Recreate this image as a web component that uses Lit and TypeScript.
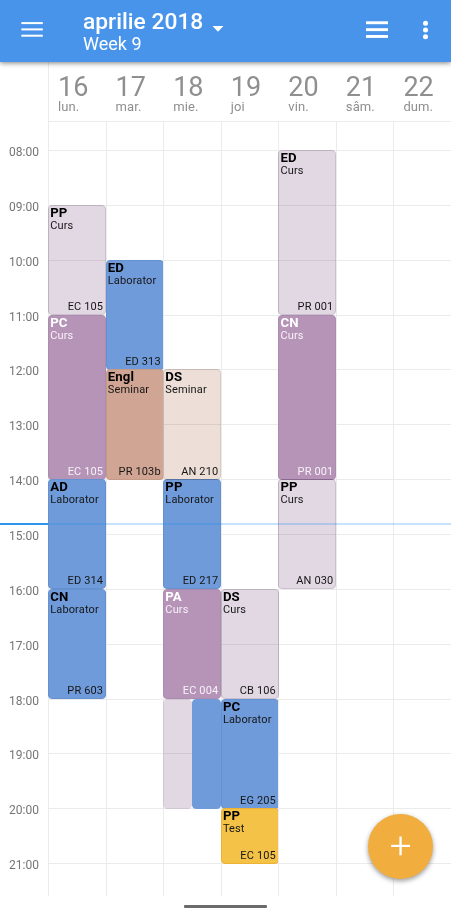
import { LitElement, html, css, svg } from "lit";
import { customElement, property } from "lit/decorators.js";
import { classMap } from "lit/directives/class-map.js";
import { styleMap } from "lit/directives/style-map.js";

interface Lesson {
  from: number;
  to: number;
  tone: string;
  title?: string;
  kind?: string;
  room?: string;
  half?: "left" | "right";
}

interface Day {
  date: number;
  name: string;
  lessons: Lesson[];
}

const FIRST_HOUR = 8;
const HOURS = Array.from({ length: 14 }, (_, i) => FIRST_HOUR + i);

const DAYS: Day[] = [
  {
    date: 16,
    name: "lun.",
    lessons: [
      { from: 9, to: 11, tone: "lavender", title: "PP", kind: "Curs", room: "EC 105" },
      { from: 11, to: 14, tone: "purple", title: "PC", kind: "Curs", room: "EC 105" },
      { from: 14, to: 16, tone: "blue", title: "AD", kind: "Laborator", room: "ED 314" },
      { from: 16, to: 18, tone: "blue", title: "CN", kind: "Laborator", room: "PR 603" },
    ],
  },
  {
    date: 17,
    name: "mar.",
    lessons: [
      { from: 10, to: 12, tone: "blue", title: "ED", kind: "Laborator", room: "ED 313" },
      { from: 12, to: 14, tone: "clay", title: "Engl", kind: "Seminar", room: "PR 103b" },
    ],
  },
  {
    date: 18,
    name: "mie.",
    lessons: [
      { from: 12, to: 14, tone: "sand", title: "DS", kind: "Seminar", room: "AN 210" },
      { from: 14, to: 16, tone: "blue", title: "PP", kind: "Laborator", room: "ED 217" },
      { from: 16, to: 18, tone: "purple", title: "PA", kind: "Curs", room: "EC 004" },
      { from: 18, to: 20, tone: "lavender", half: "left" },
      { from: 18, to: 20, tone: "blue", half: "right" },
    ],
  },
  {
    date: 19,
    name: "joi",
    lessons: [
      { from: 16, to: 18, tone: "lavender", title: "DS", kind: "Curs", room: "CB 106" },
      { from: 18, to: 20, tone: "blue", title: "PC", kind: "Laborator", room: "EG 205" },
      { from: 20, to: 21, tone: "amber", title: "PP", kind: "Test", room: "EC 105" },
    ],
  },
  {
    date: 20,
    name: "vin.",
    lessons: [
      { from: 8, to: 11, tone: "lavender", title: "ED", kind: "Curs", room: "PR 001" },
      { from: 11, to: 14, tone: "purple", title: "CN", kind: "Curs", room: "PR 001" },
      { from: 14, to: 16, tone: "lavender", title: "PP", kind: "Curs", room: "AN 030" },
    ],
  },
  { date: 21, name: "sâm.", lessons: [] },
  { date: 22, name: "dum.", lessons: [] },
];

@customElement("lesson-card")
class LessonCard extends LitElement {
  @property({ attribute: false }) lesson!: Lesson;

  static styles = css`
    :host {
      display: block;
      min-width: 0;
      min-height: 0;
    }
    .card {
      box-sizing: border-box;
      height: 100%;
      display: flex;
      flex-direction: column;
      border: 1px solid;
      border-radius: 4px;
      padding: 0 1.8px 2px 1.2px;
      color: #000;
      white-space: nowrap;
      overflow: hidden;
    }
    .title {
      font-size: 13.2px;
      line-height: 13px;
      margin-bottom: 1px;
      font-weight: 700;
      letter-spacing: 0.1px;
    }
    .kind,
    .room {
      font-size: 11px;
      line-height: 11px;
      letter-spacing: 0.14px;
      color: #161616;
    }
    .room {
      margin-top: auto;
      align-self: flex-end;
    }
    .lavender { background: #e2d8e4; border-color: #cbc1cd; }
    .purple { background: #b594b8; border-color: #ab8bb0; color: #fff; }
    .purple .kind,
    .purple .room { color: #f8f2f8; }
    .blue { background: #6f9bda; border-color: #6591d1; }
    .clay { background: #d1a593; border-color: #c49987; }
    .sand { background: #eddfd7; border-color: #d6cac3; }
    .amber { background: #f4c247; border-color: #edb234; }
    .half.lavender { border-color: #e2d8e4; }
    .half.blue { border-color: #6f9bda; }
  `;

  render() {
    const l = this.lesson;
    return html`<div class=${classMap({ card: true, [l.tone]: true, half: !!l.half })}>
      ${l.title
        ? html`<div class="title">${l.title}</div>
            <div class="kind">${l.kind}</div>
            <div class="room">${l.room}</div>`
        : ""}
    </div>`;
  }
}

@customElement("app-root")
class AppRoot extends LitElement {
  static styles = css`
    :host {
      position: relative;
      display: grid;
      grid-template-rows: 62px 59px 775px 1fr;
      width: 100%;
      height: 914px;
      overflow: hidden;
      background: #fff;
      font-family: Roboto, "Liberation Sans", sans-serif;
    }
    .bar {
      display: flex;
      align-items: center;
      background: #4894eb;
      color: #fff;
      box-shadow: 0 1px 5px rgba(0, 0, 0, 0.5);
      z-index: 2;
    }
    svg { display: block; }
    .menu { margin: -4px 0 0 21px; }
    .heading { margin: 2px 0 0 40px; white-space: nowrap; }
    .month { font-size: 22.8px; line-height: 24px; font-weight: 500; }
    .week { font-size: 18px; line-height: 20px; }
    .caret { margin: -4px 0 0 9px; }
    .list { margin: -2px 0 0 auto; }
    .more { margin: -2px 22px 0 34px; }
    .days,
    .body {
      display: grid;
      grid-template-columns: 48px repeat(7, 1fr);
    }
    .corner {
      border-right: 1px solid #ececec;
      margin-right: -1px;
    }
    .day {
      padding: 10px 0 0 10px;
      color: #8f8f8f;
    }
    .date { font-size: 27px; line-height: 30px; }
    .name { font-size: 13px; line-height: 14px; letter-spacing: 0.1px; margin-top: -2px; }
    .body { position: relative; grid-template-rows: 775px; }
    .gutter {
      display: grid;
      grid-template-rows: 30px;
      grid-auto-rows: 54.87px;
    }
    .hour {
      padding-right: 9px;
      text-align: right;
      font-size: 12px;
      line-height: 16px;
      margin-top: -7px;
      color: #757575;
    }
    .column {
      display: grid;
      grid-template-columns: 1fr 1fr;
      grid-template-rows: 28px repeat(13, 54.87px) 1fr;
      min-width: 0;
      box-sizing: border-box;
      border-top: 1px solid #ebebeb;
    }
    .slot {
      grid-column: 1 / 3;
      border-left: 1px solid #ebebeb;
      border-top: 1px solid #ebebeb;
    }
    .slot.lead { border-top: 0; }
    lesson-card { margin-right: -0.4px; margin-bottom: -0.4px; }
    lesson-card.snug { margin-right: 0; }
    lesson-card.light { mix-blend-mode: multiply; }
    .now {
      position: absolute;
      left: 0;
      right: 0;
      top: 402px;
      height: 2px;
      display: grid;
      grid-template-columns: 48px 1fr;
    }
    .now-solid { background: #2c95ec; }
    .now-faint { background: rgba(33, 140, 240, 0.25); }
    .fab {
      position: absolute;
      left: 368px;
      top: 813.5px;
      width: 65px;
      height: 65px;
      border-radius: 50%;
      background: #f1ae3e;
      box-shadow: 0 2px 5px rgba(0, 0, 0, 0.4);
      display: grid;
      place-items: center;
      z-index: 3;
    }
    .nav { display: flex; justify-content: center; }
    .handle {
      width: 83px;
      height: 3px;
      margin-top: 9px;
      border-radius: 1px;
      background: #6b6b6b;
    }
  `;

  private column(day: Day, i: number) {
    const col = String(i + 2);
    return html`<div class="column" style=${styleMap({ gridColumn: col })}>
      <div class="slot lead" style=${styleMap({ gridRow: "1" })}></div>
      ${HOURS.map(
        (h) => html`<div class="slot" style=${styleMap({ gridRow: String(h - FIRST_HOUR + 2) })}></div>`
      )}
      ${day.lessons.map((l) => {
        const row = `${l.from - FIRST_HOUR + 2} / ${l.to - FIRST_HOUR + 2}`;
        const span = l.half === "left" ? "1 / 2" : l.half === "right" ? "2 / 3" : "1 / 3";
        return html`<lesson-card
          class=${classMap({ light: l.tone === "lavender" || l.tone === "sand", snug: l.half === "left" })}
          style=${styleMap({ gridRow: row, gridColumn: span })}
          .lesson=${l}
        ></lesson-card>`;
      })}
    </div>`;
  }

  render() {
    return html`
      <header class="bar">
        <svg class="menu" width="22" height="15" viewBox="0 0 22 15" fill="#fff">
          ${[0, 6.3, 12.6].map((y) => svg`<rect x="0.3" y=${y + 0.1} width="21.5" height="2" />`)}
        </svg>
        <div class="heading">
          <div class="month">aprilie 2018</div>
          <div class="week">Week 9</div>
        </div>
        <svg class="caret" width="12" height="6" viewBox="0 0 12 6" fill="#fff"><path d="M0.5 0h11L6 5.8z" /></svg>
        <svg class="list" width="22" height="18" viewBox="0 0 22 18" fill="#fff">
          ${[0.3, 7.2, 14].map((y) => svg`<rect x="0" y=${y} width="22" height="2.9" />`)}
        </svg>
        <svg class="more" width="7" height="20" viewBox="0 0 7 20" fill="#fff">
          ${[3.2, 10, 16.8].map((y) => svg`<circle cx="3.5" cy=${y} r="2.5" />`)}
        </svg>
      </header>
      <section class="days">
        <div class="corner"></div>
        ${DAYS.map(
          (d) => html`<div class="day">
            <div class="date">${d.date}</div>
            <div class="name">${d.name}</div>
          </div>`
        )}
      </section>
      <main class="body">
        <div class="gutter">
          <span></span>
          ${HOURS.map((h) => html`<div class="hour">${String(h).padStart(2, "0")}:00</div>`)}
        </div>
        ${DAYS.map((d, i) => this.column(d, i))}
        <div class="now">
          <div class="now-solid"></div>
          <div class="now-faint"></div>
        </div>
      </main>
      <footer class="nav"><div class="handle"></div></footer>
      <div class="fab">
        <svg width="20" height="20" viewBox="0 0 20 20" fill="#fff">
          <rect x="0.2" y="8.8" width="18.8" height="2.2" />
          <rect x="8.4" y="0.5" width="2.3" height="18.8" />
        </svg>
      </div>
    `;
  }
}
